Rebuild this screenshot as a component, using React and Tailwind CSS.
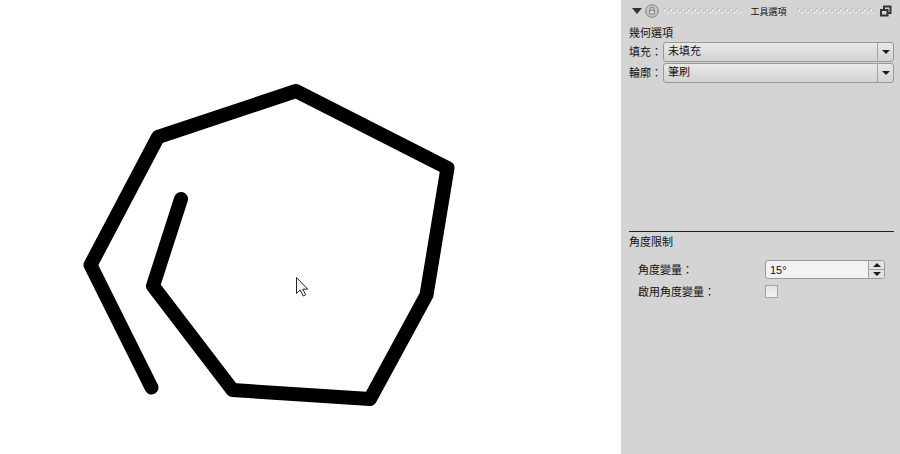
import React from "react";

function Grip() {
  return (
    <svg className="h-2 min-w-0 flex-1" aria-hidden="true">
      <defs>
        <pattern id="grip" width="6" height="8" patternUnits="userSpaceOnUse">
          <circle cx="1.5" cy="2.5" r="1.2" fill="#b4b4b4" />
          <circle cx="2.3" cy="3.3" r="1.1" fill="#f4f4f4" />
          <circle cx="4.3" cy="4.5" r="1.2" fill="#b4b4b4" />
          <circle cx="4.9" cy="5.5" r="1.1" fill="#f4f4f4" />
        </pattern>
      </defs>
      <rect width="100%" height="8" fill="url(#grip)" />
    </svg>
  );
}

function Dropdown({ id, label, value }) {
  return (
    <div className="flex h-5 items-center">
      <label htmlFor={id} className="w-[34px] shrink-0 whitespace-nowrap">{label}</label>
      <div className="relative min-w-0 flex-1">
        <select
          id={id}
          defaultValue={value}
          className="block h-5 w-full appearance-none rounded-[3px] border border-[#999] bg-linear-to-b from-[#e9e9e9] to-[#d3d3d3] pr-5 pb-0.5 pl-1 leading-4 outline-none"
        >
          <option>{value}</option>
        </select>
        <span className="pointer-events-none absolute inset-y-px right-px flex w-4 items-center justify-center border-l border-[#a3a3a3]">
          <svg width="8" height="4" viewBox="0 0 8 4" aria-hidden="true">
            <path d="M0 0h8L4 4z" fill="#1c1c1c" />
          </svg>
        </span>
      </div>
    </div>
  );
}

function Canvas() {
  return (
    <main className="min-w-0 flex-1 overflow-hidden bg-white">
      <svg width="621" height="454" viewBox="0 0 621 454" className="block" role="img" aria-label="Polyline">
        <polyline
          points="181,199 153,286 232.5,390 370,399 426.5,295 447.5,168 296,91 158,137 90.5,265 151.5,387.5"
          fill="none"
          stroke="#000"
          strokeWidth="14"
          strokeLinecap="round"
          strokeLinejoin="round"
        />
        <path
          d="M296.5 277.5v16l3.7-3.5 3 6 2.5-1.2-2.8-5.6h4.8z"
          fill="#f5f5f8"
          stroke="#26262e"
          strokeWidth="1"
        />
      </svg>
    </main>
  );
}

export default function App() {
  return (
    <div className="flex min-h-screen bg-white font-['Liberation_Sans','Noto_Sans_CJK_TC',sans-serif] text-[11px] leading-5 text-[#111]">
      <Canvas />
      <aside className="w-[279px] shrink-0 bg-[#d4d4d4] pr-1.5 pl-2">
        <header className="flex h-[21px] items-center">
          <button type="button" aria-label="收合" className="flex w-4 justify-center">
            <svg width="10" height="6" viewBox="0 0 10 6"><path d="M0 0h10L5 6z" fill="#333" /></svg>
          </button>
          <button type="button" aria-label="鎖定" className="mr-1">
            <svg width="14" height="14" viewBox="0 0 14 14" fill="none">
              <circle cx="7" cy="7" r="6.3" fill="#c6c6c6" stroke="#838383" />
              <path d="M5 6.5V5a2 2 0 0 1 4 0v1.5" stroke="#858585" />
              <rect x="4.5" y="6.5" width="5" height="3.5" fill="#ddd" stroke="#858585" />
            </svg>
          </button>
          <Grip />
          <h1 className="mx-2.5 pt-0.5 text-[9px]">工具選項</h1>
          <Grip />
          <button type="button" aria-label="浮動面板" className="mr-0.5 ml-1.5">
            <svg width="12" height="12" viewBox="0 0 12 12" fill="none" stroke="#333" strokeWidth="2">
              <path d="M4 4V1.5h6.5V8H8" />
              <rect x="1" y="5" width="6.5" height="5.5" />
            </svg>
          </button>
        </header>

        <section className="flex h-[210px] flex-col pt-[3px]">
          <h2 className="leading-[18px]">幾何選項</h2>
          <div className="flex flex-col gap-px">
            <Dropdown id="fill" label="填充：" value="未填充" />
            <Dropdown id="outline" label="輪廓：" value="筆刷" />
          </div>
        </section>

        <section className="border-t border-[#222]">
          <h2>角度限制</h2>
          <div className="flex flex-col gap-[3px] px-[9px] pt-2">
            <div className="flex h-[19px] items-center">
              <label htmlFor="angle" className="w-[127px]">角度變量：</label>
              <div className="flex h-[19px] min-w-0 flex-1 overflow-hidden rounded-[3px] border border-[#999] bg-[#f2f2f2]">
                <input id="angle" type="text" defaultValue="15°" className="min-w-0 flex-1 bg-transparent pl-1 outline-none" />
                <div className="flex w-4 flex-col border-l border-[#a3a3a3] bg-[#e2e2e2]">
                  <button type="button" aria-label="增加" className="flex flex-1 items-center justify-center border-b border-[#a3a3a3]">
                    <svg width="8" height="4" viewBox="0 0 8 4"><path d="M0 4h8L4 0z" fill="#1c1c1c" /></svg>
                  </button>
                  <button type="button" aria-label="減少" className="flex flex-1 items-center justify-center">
                    <svg width="8" height="4" viewBox="0 0 8 4"><path d="M0 0h8L4 4z" fill="#1c1c1c" /></svg>
                  </button>
                </div>
              </div>
            </div>
            <div className="flex h-[19px] items-center">
              <label htmlFor="snap" className="w-[127px]">啟用角度變量：</label>
              <input id="snap" type="checkbox" className="size-[13px] appearance-none border border-[#a3a3a3] bg-linear-to-b from-[#e4e4e4] to-[#f2f2f2] checked:bg-[#555]" />
            </div>
          </div>
        </section>
      </aside>
    </div>
  );
}
